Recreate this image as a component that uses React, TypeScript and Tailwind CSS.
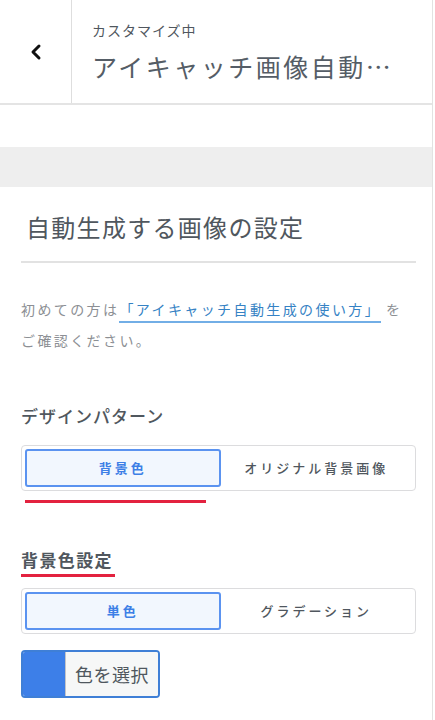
const font = { fontFamily: '"Noto Sans CJK JP", "Noto Sans", sans-serif' }

const Segmented = ({ left, right }: { left: string; right: string }) => (
  <div className="flex h-[46px] w-[395px] rounded-[4px] border border-[#dcdcde] bg-white p-[3px]">
    <div className="flex flex-1 items-center justify-center rounded-[3px] border-2 border-[#5b93f0] bg-[#f2f7fe] text-[13px] font-bold tracking-[3px] text-[#3d7fe6]">
      {left}
    </div>
    <div className="flex flex-1 items-center justify-center text-[13px] font-medium tracking-[3px] text-[#50575e]">
      {right}
    </div>
  </div>
)

const App = () => {
  return (
    <div className="min-h-[720px] w-[433px] border-r border-[#e2e2e2] bg-white" style={font}>
      <header className="flex h-[105px] border-b-2 border-[#e4e4e4]">
        <div className="flex w-[72px] shrink-0 items-center justify-center border-r border-[#dedede]">
          <svg width="16" height="18" viewBox="0 0 16 18" fill="none">
            <path d="M11 3 L5 9 L11 15" stroke="#111" strokeWidth="3" strokeLinecap="round" strokeLinejoin="round" />
          </svg>
        </div>
        <div className="min-w-0 flex-1 pl-[20px] pr-[30px] pt-[18px]">
          <div className="text-[14px] leading-[24px] tracking-[1px] text-[#50575e]">カスタマイズ中</div>
          <div className="truncate pt-[7px] text-[25px] leading-[34px] tracking-[2.5px] text-[#555d66]">
            アイキャッチ画像自動生成
          </div>
        </div>
      </header>

      <div className="mt-[42px] h-[40px] bg-[#eeeeee]" />

      <div className="pl-[21px]">
        <h1 className="pl-[5px] pt-[23px] text-[24px] font-normal leading-[34px] tracking-[1.3px] text-[#50575e]">
          自動生成する画像の設定
        </h1>
        <div className="mt-[17px] h-[2px] w-[395px] bg-[#e2e2e2]" />

        <p className="mt-[31px] w-[405px] text-[14px] leading-[31px] tracking-[2.4px] text-[#8c8f94]">
          初めての方は
          <span className="border-b-2 border-[#72aee6] pb-[2px] text-[#3582c4]">「アイキャッチ自動生成の使い方」</span>
          <span className="ml-[5px]">を</span>
          <br />
          ご確認ください。
        </p>

        <h2 className="mt-[46px] text-[17px] font-medium leading-[28px] tracking-[1px] text-[#50575e]">デザインパターン</h2>
        <div className="mt-[15px]">
          <Segmented left="背景色" right="オリジナル背景画像" />
        </div>
        <div className="ml-[4px] mt-[9px] h-[3px] w-[181px] bg-[#e3223f]" />

        <h2 className="mt-[43px] inline-block text-[17px] font-bold leading-[28px] tracking-[1.4px] text-[#50575e]">
          背景色設定
        </h2>
        <div className="mt-0 h-[3px] w-[94px] bg-[#e3223f]" />
        <div className="mt-[11px]">
          <Segmented left="単色" right="グラデーション" />
        </div>

        <div className="mt-[16px] flex h-[48px] w-[139px] overflow-hidden rounded-[4px] border-2 border-[#3f7fd6]">
          <div className="w-[42px] bg-[#3d7fe8]" />
          <div className="flex flex-1 items-center justify-center border-l border-[#c3c4c7] bg-[#f6f7f7] text-[18px] tracking-[0.5px] text-[#50575e]">
            色を選択
          </div>
        </div>
      </div>
    </div>
  )
}

export default App
